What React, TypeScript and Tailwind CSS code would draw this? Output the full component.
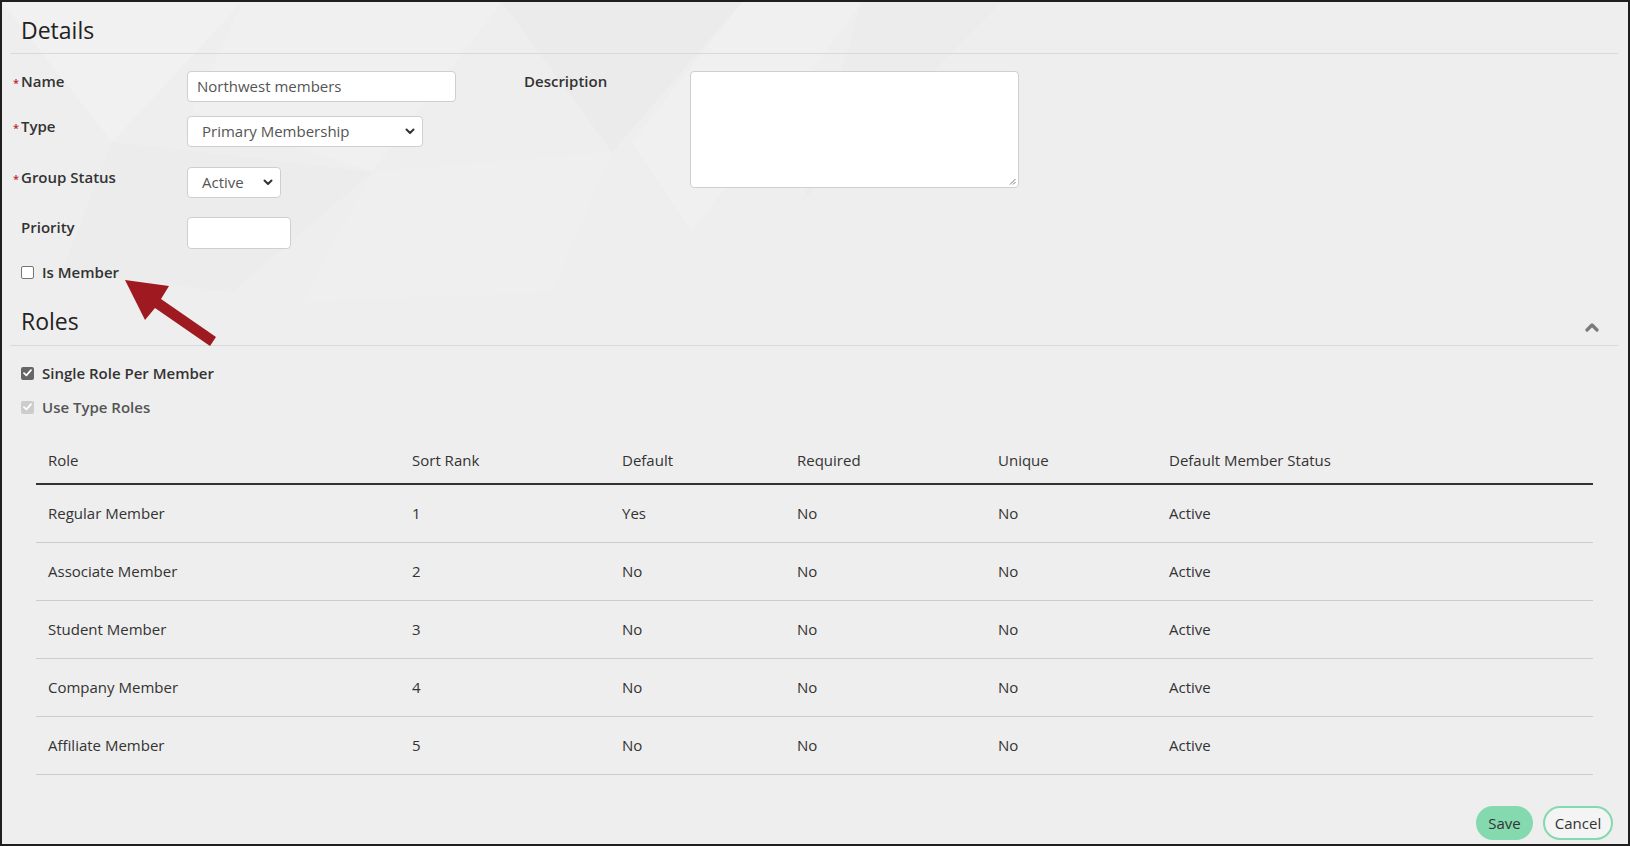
import React from 'react';

const roles = [
  { name: 'Regular Member', rank: '1', def: 'Yes', req: 'No', uniq: 'No', status: 'Active' },
  { name: 'Associate Member', rank: '2', def: 'No', req: 'No', uniq: 'No', status: 'Active' },
  { name: 'Student Member', rank: '3', def: 'No', req: 'No', uniq: 'No', status: 'Active' },
  { name: 'Company Member', rank: '4', def: 'No', req: 'No', uniq: 'No', status: 'Active' },
  { name: 'Affiliate Member', rank: '5', def: 'No', req: 'No', uniq: 'No', status: 'Active' },
];

const Label = ({ text, required }: { text: string; required?: boolean }) => (
  <div className="w-[177px] pl-[3px] flex items-start text-[15px] leading-[20px] font-semibold text-[#333]">
    <span className="w-[8px] pt-[5px] text-[#c0262c] text-[11px] leading-[14px]">{required ? '*' : ''}</span>
    <span>{text}</span>
  </div>
);

const Chevron = () => (
  <svg width="10" height="7" viewBox="0 0 10 7" className="shrink-0">
    <path d="M1.5 1.5 L5 5 L8.5 1.5" fill="none" stroke="#333" strokeWidth="2" strokeLinecap="round" strokeLinejoin="round" />
  </svg>
);

const Check = ({ color }: { color: string }) => (
  <span className={`w-[13px] h-[13px] rounded-[2px] flex items-center justify-center ${color}`}>
    <svg width="9" height="8" viewBox="0 0 9 8">
      <path d="M1 4.2 L3.4 6.4 L8 1.2" fill="none" stroke="#fff" strokeWidth="1.8" strokeLinecap="round" strokeLinejoin="round" />
    </svg>
  </span>
);

export default function App() {
  return (
    <div className="w-[1630px] h-[846px] bg-[#eeeeee] border-2 border-[#1f1f1f] relative overflow-hidden font-['Open_Sans',sans-serif] text-[#333]">
      {/* faint background pattern */}
      <svg className="absolute left-0 top-0" width="1000" height="300" viewBox="0 0 1000 300">
        <polygon points="0,0 240,0 110,140" fill="#ffffff" opacity="0.18" />
        <polygon points="240,0 500,0 370,170 190,110" fill="#ffffff" opacity="0.12" />
        <polygon points="500,0 740,0 610,150" fill="#e6e6e6" opacity="0.35" />
        <polygon points="740,0 860,0 690,230 630,140" fill="#ffffff" opacity="0.14" />
        <polygon points="110,140 370,170 230,290 60,270" fill="#e9e9e9" opacity="0.25" />
        <polygon points="370,170 610,150 550,290 300,300" fill="#ffffff" opacity="0.1" />
        <polygon points="860,0 1000,0 800,200" fill="#e8e8e8" opacity="0.25" />
      </svg>

      <div className="relative pl-[8px] pr-[10px]">
        {/* Details header */}
        <div className="pt-[14px] pb-[9px] border-b border-[#d9d9d9] pl-[11px]">
          <h2 className="text-[23px] leading-[28px] font-normal text-[#222]">Details</h2>
        </div>

        {/* Details form */}
        <div className="flex mt-[17px]">
          <div className="w-[514px] flex flex-col">
            <div className="flex items-start">
              <Label text="Name" required />
              <div className="w-[269px] h-[31px] bg-white border border-[#cfcfcf] rounded-[4px] px-[9px] flex items-center text-[15px] text-[#555]">
                Northwest members
              </div>
            </div>
            <div className="flex items-start mt-[14px]">
              <Label text="Type" required />
              <div className="w-[236px] h-[31px] bg-white border border-[#cfcfcf] rounded-[4px] pl-[14px] pr-[7px] flex items-center justify-between text-[15px] text-[#555]">
                <span>Primary Membership</span>
                <Chevron />
              </div>
            </div>
            <div className="flex items-start mt-[20px]">
              <Label text="Group Status" required />
              <div className="w-[94px] h-[31px] bg-white border border-[#cfcfcf] rounded-[4px] pl-[14px] pr-[7px] flex items-center justify-between text-[15px] text-[#555]">
                <span>Active</span>
                <Chevron />
              </div>
            </div>
            <div className="flex items-start mt-[19px]">
              <Label text="Priority" />
              <div className="w-[104px] h-[32px] bg-white border border-[#cfcfcf] rounded-[4px]" />
            </div>
            <div className="flex items-center mt-[13px] pl-[11px] h-[20px]">
              <span className="w-[13px] h-[13px] bg-white border border-[#767676] rounded-[2px]" />
              <span className="ml-[8px] text-[15px] font-semibold text-[#333]">Is Member</span>
            </div>
          </div>
          <div className="w-[166px] text-[15px] leading-[20px] font-semibold text-[#333]">Description</div>
          <div className="w-[329px] h-[117px] bg-white border border-[#cfcfcf] rounded-[4px] relative">
            <svg className="absolute right-[2px] bottom-[2px]" width="7" height="7" viewBox="0 0 7 7">
              <path d="M6.5 1 L1 6.5 M6.5 4 L4 6.5" stroke="#777" strokeWidth="1" />
            </svg>
          </div>
        </div>

        {/* Roles header */}
        <div className="mt-[25px] pb-[10px] border-b border-[#d9d9d9] pl-[11px] pr-[19px] flex justify-between">
          <h2 className="text-[23px] leading-[28px] font-normal text-[#222]">Roles</h2>
          <svg width="14" height="10" viewBox="0 0 14 10" className="self-start mt-[15px]">
            <path d="M2 8 L7 3 L12 8" fill="none" stroke="#7a7a7a" strokeWidth="3.2" strokeLinecap="round" strokeLinejoin="round" />
          </svg>
        </div>

        <div className="flex items-center mt-[17px] pl-[11px] h-[20px]">
          <Check color="bg-[#666]" />
          <span className="ml-[8px] text-[15px] font-semibold text-[#333]">Single Role Per Member</span>
        </div>
        <div className="flex items-center mt-[14px] pl-[11px] h-[20px]">
          <Check color="bg-[#cccccc]" />
          <span className="ml-[8px] text-[15px] font-semibold text-[#555]">Use Type Roles</span>
        </div>

        {/* Roles table */}
        <div className="ml-[26px] mr-[25px] mt-[20px] text-[15px] text-[#333]">
          <div className="flex items-center h-[48px] border-b-2 border-[#333]">
            <div className="w-[364px] pl-[12px]">Role</div>
            <div className="w-[210px] pl-[12px]">Sort Rank</div>
            <div className="w-[175px] pl-[12px]">Default</div>
            <div className="w-[201px] pl-[12px]">Required</div>
            <div className="w-[171px] pl-[12px]">Unique</div>
            <div className="flex-1 pl-[12px]">Default Member Status</div>
          </div>
          {roles.map((r) => (
            <div key={r.name} className="flex items-center h-[58px] border-b border-[#cccccc]">
              <div className="w-[364px] pl-[12px]">{r.name}</div>
              <div className="w-[210px] pl-[12px]">{r.rank}</div>
              <div className="w-[175px] pl-[12px]">{r.def}</div>
              <div className="w-[201px] pl-[12px]">{r.req}</div>
              <div className="w-[171px] pl-[12px]">{r.uniq}</div>
              <div className="flex-1 pl-[12px]">{r.status}</div>
            </div>
          ))}
        </div>

        <div className="flex justify-end gap-[10px] mt-[31px] pr-[5px]">
          <button className="w-[57px] h-[34px] rounded-full bg-[#84d9ae] text-[15px] text-[#333]">Save</button>
          <button className="w-[70px] h-[34px] rounded-full border-2 border-[#84d9ae] bg-[#f4f4f4] text-[15px] text-[#333]">Cancel</button>
        </div>
      </div>

      {/* annotation arrow */}
      <svg className="absolute left-0 top-0 pointer-events-none" width="260" height="380" viewBox="0 0 260 380">
        <polygon points="123,278 167,284 159,297 214,335 208,344 153,306 143,318" fill="#9e1a20" />
      </svg>
    </div>
  );
}
